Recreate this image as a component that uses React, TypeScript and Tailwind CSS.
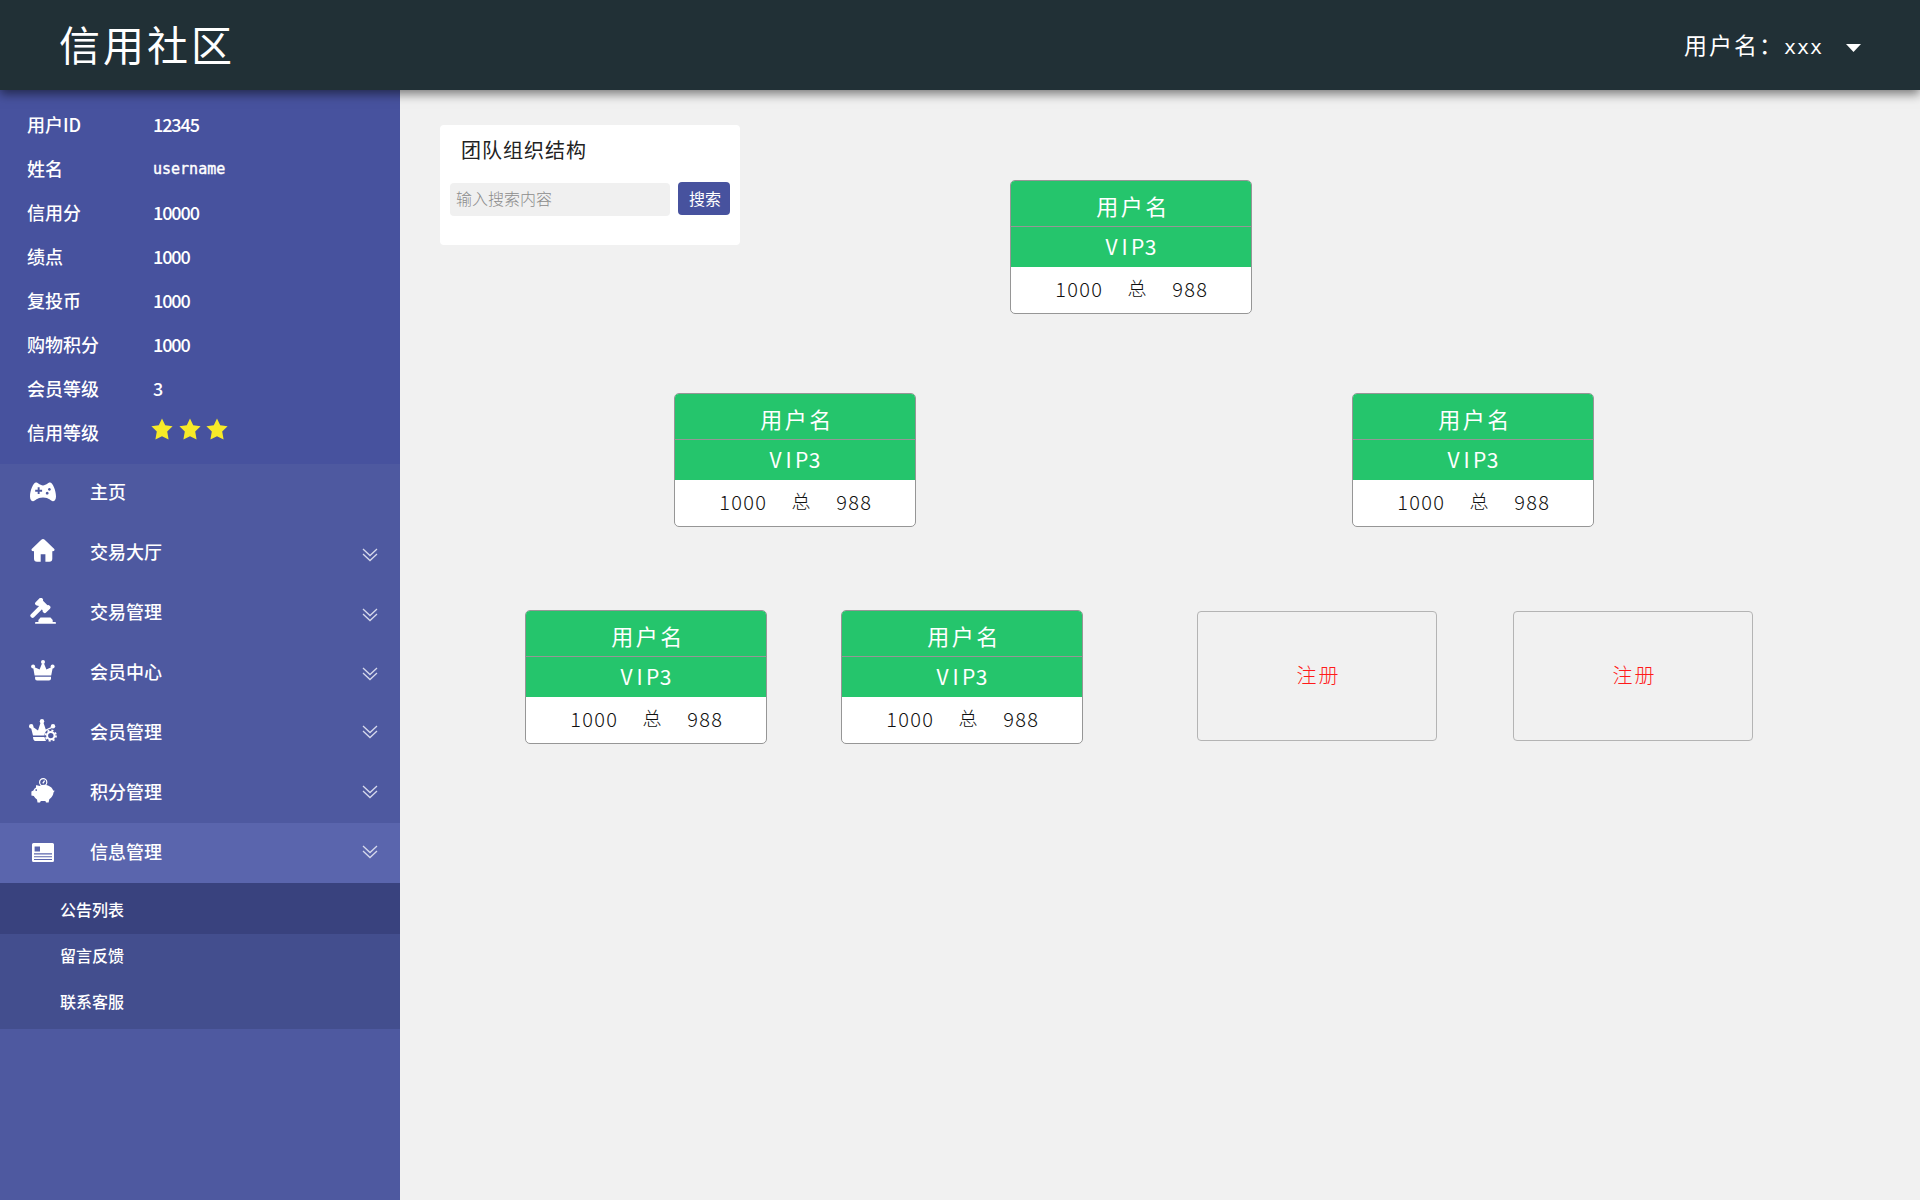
import React from "react";

const INFO: [string, string][] = [
  ["用户ID", "12345"],
  ["姓名", "username"],
  ["信用分", "10000"],
  ["绩点", "1000"],
  ["复投币", "1000"],
  ["购物积分", "1000"],
  ["会员等级", "3"],
];

function Gamepad() {
  return (
    <svg className="h-5 w-[26px]" viewBox="0 0 26 20" fill="currentColor">
      <path fillRule="evenodd" d="M6 0.6C8.4 0.6 9.6 3.4 13 3.4S17.6 0.6 20 0.6C22.6 0.6 26 8.5 26 14.5C26 17.5 24.6 19.3 22.9 19.3C20.6 19.3 19.4 15.6 13 15.6S5.4 19.3 3.1 19.3C1.4 19.3 0 17.5 0 14.5C0 8.5 3.4 0.6 6 0.6ZM7.7 5.3V7.7H5.2V9.7H7.7V12.1H9.6V9.7H12.1V7.7H9.6V5.3ZM19.4 6a1.4 1.4 0 1 0 .01 0ZM17.2 9.8a1.4 1.4 0 1 0 .01 0Z" />
    </svg>
  );
}
function House() {
  return (
    <svg className="h-[23px] w-6" viewBox="0 0 24 23" fill="currentColor">
      <path d="M10.3 0.8Q12 -0.7 13.7 0.8L23.3 10Q24.3 12.2 21.3 12.2V19.5Q21.3 22.8 18.3 22.8H14.4V15.2H9.7V22.8H6Q3 22.8 3 19.5V12.2Q-.3 12.2 0.7 10Z" />
    </svg>
  );
}
function Gavel() {
  return (
    <svg className="h-[26px] w-[26px]" viewBox="0 0 26 26" fill="currentColor">
      <g transform="translate(12.8 7.4) rotate(45)">
        <rect x="-5" y="-3.5" width="10" height="7" />
        <rect x="-7.4" y="-4.6" width="4.2" height="9.2" rx="1.8" />
        <rect x="3.2" y="-4.6" width="4.2" height="9.2" rx="1.8" />
        <rect x="-2.2" y="2" width="4.4" height="14.6" rx="2" />
      </g>
      <path d="M10.5 19.4H20.5L22.7 22V24H8.4V22Z" />
      <rect x="5" y="24" width="21" height="1.8" rx=".9" />
    </svg>
  );
}
function Crown() {
  return (
    <svg className="h-[21px] w-6" viewBox="0 0 24 21" fill="currentColor">
      <path d="M3.6 15.4L2.2 7.6L3.6 7.2L8.6 9.6L11 3.5H13L15.4 9.6L20.2 7.2L21.8 7.6L20.2 15.4Z" />
      <circle cx="12" cy="2.1" r="2" />
      <circle cx="2.1" cy="6.6" r="2" />
      <circle cx="21.6" cy="6.6" r="2" />
      <path d="M4.1 16.7H20V18.5Q20 20.5 18 20.5H6Q4.1 20.5 4.1 18.5Z" />
    </svg>
  );
}
function CrownGear() {
  return (
    <svg className="h-6 w-7" viewBox="0 0 28 24" fill="currentColor">
      <path d="M4 16.6L1.8 8L3.4 7.6L9 11.4L11.8 3H14.2L16.8 10.5L23.2 7.4L22.4 9.6Q17.2 10.4 15.6 15L15.4 16.6ZM4 18H15.4L17 22H6Q4.2 21.5 4 18Z" />
      <circle cx="13" cy="2.2" r="2.2" />
      <circle cx="2.2" cy="7.2" r="2.2" />
      <circle cx="24" cy="7.2" r="2.2" />
      <circle cx="21.8" cy="16.6" r="3.7" fill="none" stroke="currentColor" strokeWidth="2" />
      <circle cx="21.8" cy="16.6" r="5.2" fill="none" stroke="currentColor" strokeWidth="1.8" strokeDasharray="2 2.08" />
    </svg>
  );
}
function Piggy() {
  return (
    <svg className="h-[26px] w-6" viewBox="0 0 24 26" fill="currentColor">
      <path fillRule="evenodd" d="M5 7.2Q7 7 8.3 8Q12.5 5.8 17 7.4Q21.2 9 22.2 12.5L23.7 12.8L22.5 14.5Q22.3 18 18.3 21.3L17.6 24.6H15L14.4 23H9.8L9 24.6H6.5L6 21.5Q4 20.3 2.8 18L0.4 17.4V13.4L2.4 12.6Q3 10.7 5 9.5ZM5.2 11.2a.8.8 0 1 0 .01 0Z" />
      <circle cx="12.2" cy="4.2" r="3.6" fill="none" stroke="currentColor" strokeWidth="1.2" />
      <path d="M13.6 2.6L11.8 5.4" stroke="currentColor" strokeWidth="1.3" />
    </svg>
  );
}
function News() {
  return (
    <svg className="h-[19px] w-[22px]" viewBox="0 0 22 19" fill="currentColor">
      <path fillRule="evenodd" d="M1.5 0H20.5Q22 0 22 1.5V17.5Q22 19 20.5 19H1.5Q0 19 0 17.5V1.5Q0 0 1.5 0ZM2.6 3.4V8.4H8V3.4ZM2 10.3V11.4H20V10.3ZM2 13.2V14.3H20V13.2ZM2 16V16.9H20V16Z" />
    </svg>
  );
}

const MENU = [
  { label: "主页", icon: <Gamepad />, iconPad: "pb-[3px]", arrow: "", row: "h-[59px]" },
  { label: "交易大厅", icon: <House />, iconPad: "pb-[5px]", arrow: "pt-[3px]", row: "h-[60px]" },
  { label: "交易管理", icon: <Gavel />, iconPad: "pb-[5px]", arrow: "pt-[3px]", row: "h-[60px]" },
  { label: "会员中心", icon: <Crown />, iconPad: "pb-[6px]", arrow: "pt-[1px]", row: "h-[60px]" },
  { label: "会员管理", icon: <CrownGear />, iconPad: "pb-[5px]", arrow: "pb-[3px]", row: "h-[60px]" },
  { label: "积分管理", icon: <Piggy />, iconPad: "pb-[5px]", arrow: "pb-[3px]", row: "h-[60px]" },
  { label: "信息管理", icon: <News />, iconPad: "pb-[2px]", arrow: "pb-[3px]", row: "h-[60px] bg-[#5a65ad]" },
];

function Chevrons() {
  return (
    <svg className="h-[14px] w-4" viewBox="0 0 16 14" fill="none" stroke="#d6d9ec" strokeWidth="1.3">
      <path d="M1 1L8 7.5L15 1M1 6L8 12.5L15 6" />
    </svg>
  );
}
function Star() {
  return (
    <svg className="h-[22px] w-[22px]" viewBox="0 0 22 22" fill="#f7ea28">
      <path d="M11 .4L14.2 7.2L21.6 8.2L16.2 13.4L17.6 21.4L11 18.2L4.4 21.4L5.8 13.4L.4 8.2L7.8 7.2Z" />
    </svg>
  );
}

function Digits({ value }: { value: string }) {
  return (
    <span className="flex">
      {value.split("").map((c, i) => (
        <span key={i} className="w-3 text-center">{c}</span>
      ))}
    </span>
  );
}

function Member() {
  return (
    <div className="flex h-[134px] w-[242px] flex-col overflow-hidden rounded-[5px] border border-[#969696] bg-white">
      <div className="flex h-[46px] shrink-0 items-center justify-center border-b border-[#969696] bg-[#25c56c] pl-[4px] pt-[4px] text-[22px] tracking-[2.5px] text-white">
        用户名
      </div>
      <div className="flex h-[40px] shrink-0 items-center justify-center bg-[#25c56c] text-[21px] text-white">
        {"VIP3".split("").map((c) => (
          <span key={c} className="w-[13px] text-center">{c}</span>
        ))}
      </div>
      <div className="flex flex-1 items-center justify-center gap-[25px] pb-[3px] text-[20px] font-light text-[#111]">
        <Digits value="1000" />
        <span className="text-[19px]">总</span>
        <Digits value="988" />
      </div>
    </div>
  );
}
function Register() {
  return (
    <div className="mt-px flex h-[130px] w-[240px] items-center justify-center rounded-[4px] border border-[#b4b4b4] pb-[2px] pl-[3px] text-[20px] font-light tracking-[2px] text-[#ff1a1a]">
      注册
    </div>
  );
}

export default function App() {
  return (
    <div className="flex h-[1200px] w-[1920px] flex-col overflow-hidden bg-[#f1f1f1] font-['Noto_Sans_CJK_SC',sans-serif]">
      <header className="z-10 flex h-[90px] shrink-0 items-center justify-between bg-[#213036] pl-[59px] pr-[59px] text-white shadow-[0_4px_10px_rgba(0,0,0,0.5)]">
        <h1 className="pb-[2px] text-[41px] font-normal tracking-[3px]">信用社区</h1>
        <div className="flex items-center">
          <span className="pb-[2px] text-[23px] tracking-[2px]">用户名：</span>
          <span className="mt-[3px] font-['DejaVu_Sans_Mono',monospace] text-[20px] tracking-[1px]">xxx</span>
          <svg className="ml-[23px] mt-[6px] h-2 w-[15px]" viewBox="0 0 15 8" fill="white"><path d="M0 0H15L7.5 8Z" /></svg>
        </div>
      </header>
      <div className="flex flex-1">
        <aside className="flex w-[400px] shrink-0 flex-col bg-[#4e59a0] text-white">
          <div className="h-[374px] bg-[#47529e] pt-[12px] text-[18px] font-medium">
            {INFO.map(([k, v]) => (
              <div key={k} className="flex h-11 items-center pl-[27px]">
                <span className="w-[126px]">{k}</span>
                {v === "username" ? (
                  <span className="pt-[3px] font-['DejaVu_Sans_Mono',monospace] text-[15px] [-webkit-text-stroke:0.4px_white]">{v}</span>
                ) : (
                  <span className="tracking-[-1.1px]">{v}</span>
                )}
              </div>
            ))}
            <div className="flex h-11 items-center pl-[27px]">
              <span className="w-[124px]">信用等级</span>
              <span className="flex gap-[5.5px] pb-[6px]"><Star /><Star /><Star /></span>
            </div>
          </div>
          <nav>
            {MENU.map((m, i) => (
              <div key={m.label} className={`flex items-center pr-[22px] ${m.row}`}>
                <span className={`flex w-[86px] justify-center ${m.iconPad}`}>{m.icon}</span>
                <span className="ml-1 flex-1 pb-[4px] text-[18px] font-medium">{m.label}</span>
                {i > 0 && <span className={m.arrow}><Chevrons /></span>}
              </div>
            ))}
          </nav>
          <div className="h-[146px] bg-[#434e8e] text-[16px] font-medium">
            <div className="flex h-[51px] items-center bg-[#39427e] pl-[60px] pt-px">公告列表</div>
            <div className="flex h-[46px] items-center pb-[4px] pl-[60px]">留言反馈</div>
            <div className="flex h-[46px] items-center pb-[4px] pl-[60px]">联系客服</div>
          </div>
        </aside>
        <main className="relative flex-1">
          <section className="absolute left-[40px] top-[35px] h-[120px] w-[300px] rounded-[4px] bg-white px-[10px] pt-[10px]">
            <h2 className="pl-[11px] text-[20px] font-normal leading-[30px] tracking-[1px] text-[#222]">团队组织结构</h2>
            <div className="mt-[17px] flex gap-2">
              <input placeholder="输入搜索内容" className="mt-px h-[33px] w-[220px] rounded-[4px] bg-[#f0f0f0] px-[6px] pb-[3px] text-[16px] font-light outline-none placeholder:text-[#8c8c8c]" />
              <button className="h-[33px] w-[52px] rounded-[4px] bg-[#47529e] pb-[2px] pl-[2px] text-[16px] text-white">搜索</button>
            </div>
          </section>
          <div className="absolute left-[610px] top-[90px]"><Member /></div>
          <div className="absolute left-[274px] top-[303px]"><Member /></div>
          <div className="absolute left-[952px] top-[303px]"><Member /></div>
          <div className="absolute left-[125px] top-[520px]"><Member /></div>
          <div className="absolute left-[441px] top-[520px]"><Member /></div>
          <div className="absolute left-[797px] top-[520px]"><Register /></div>
          <div className="absolute left-[1113px] top-[520px]"><Register /></div>
        </main>
      </div>
    </div>
  );
}
